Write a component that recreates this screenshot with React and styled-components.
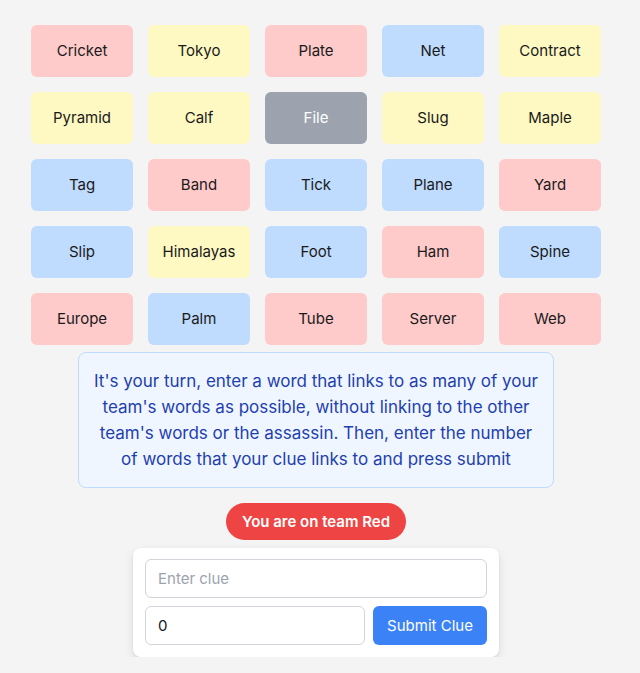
import React, { useState } from "react";
import styled, { createGlobalStyle } from "styled-components";

const GlobalStyle = createGlobalStyle`
  body {
    margin: 0;
    background: #f4f4f4;
    font-family: Inter, "Noto Sans", sans-serif;
  }
  * { box-sizing: border-box; }
`;

const words = [
  ["Cricket", "red"], ["Tokyo", "yellow"], ["Plate", "red"], ["Net", "blue"], ["Contract", "yellow"],
  ["Pyramid", "yellow"], ["Calf", "yellow"], ["File", "gray"], ["Slug", "yellow"], ["Maple", "yellow"],
  ["Tag", "blue"], ["Band", "red"], ["Tick", "blue"], ["Plane", "blue"], ["Yard", "red"],
  ["Slip", "blue"], ["Himalayas", "yellow"], ["Foot", "blue"], ["Ham", "red"], ["Spine", "blue"],
  ["Europe", "red"], ["Palm", "blue"], ["Tube", "red"], ["Server", "red"], ["Web", "red"],
];

const colours = {
  red: "#fecaca",
  yellow: "#fef9c3",
  blue: "#bfdbfe",
  gray: "#9ca3af",
};

const Page = styled.div`
  width: 632px;
  padding-top: 25px;
  display: flex;
  flex-direction: column;
  align-items: center;
`;

const Board = styled.div`
  display: grid;
  grid-template-columns: repeat(5, 102px);
  grid-auto-rows: 52px;
  gap: 15px;
`;

const Card = styled.div`
  display: flex;
  align-items: center;
  justify-content: center;
  border-radius: 6px;
  background: ${(p) => colours[p.$team]};
  color: ${(p) => (p.$team === "gray" ? "#ffffff" : "#1a1a1a")};
  font-size: 15px;
  padding-bottom: 2px;
`;

const Notice = styled.div`
  margin-top: 7px;
  width: 476px;
  padding: 15px 14px;
  background: #eff6ff;
  border: 1px solid #bfdbfe;
  border-radius: 8px;
  color: #1e40af;
  font-size: 17px;
  line-height: 26px;
  text-align: center;
`;

const TeamBadge = styled.div`
  margin-top: 15px;
  height: 37px;
  padding: 0 16px;
  display: flex;
  align-items: center;
  border-radius: 999px;
  background: #ef4444;
  color: #ffffff;
  font-size: 15px;
  font-weight: 600;
`;

const CluePanel = styled.form`
  margin-top: 8px;
  width: 366px;
  padding: 11px 12px 12px;
  background: #ffffff;
  border-radius: 8px;
  box-shadow: 0 4px 10px rgba(0, 0, 0, 0.1), 0 1px 3px rgba(0, 0, 0, 0.06);
  display: flex;
  flex-direction: column;
  gap: 8px;
`;

const Row = styled.div`
  display: flex;
  gap: 8px;
`;

const Input = styled.input`
  height: 39px;
  width: ${(p) => p.$width || "100%"};
  padding: 0 12px;
  border: 1px solid #d1d5db;
  border-radius: 6px;
  font-family: inherit;
  font-size: 15px;
  color: #111827;
  background: #ffffff;
  outline: none;
  &::placeholder { color: #9ca3af; }
`;

const SubmitButton = styled.button`
  flex: 1;
  height: 39px;
  border: none;
  border-radius: 6px;
  background: #3b82f6;
  color: #ffffff;
  font-family: inherit;
  font-size: 15px;
  cursor: pointer;
`;

export default function App() {
  const [clue, setClue] = useState("");
  const [count, setCount] = useState(0);

  return (
    <>
      <GlobalStyle />
      <Page>
        <Board>
          {words.map(([w, team]) => (
            <Card key={w} $team={team}>{w}</Card>
          ))}
        </Board>
        <Notice>
          It's your turn, enter a word that links to as many of your team's words as possible,
          without linking to the other team's words or the assassin. Then, enter the number of
          words that your clue links to and press submit
        </Notice>
        <TeamBadge>You are on team Red</TeamBadge>
        <CluePanel onSubmit={(e) => e.preventDefault()}>
          <Input placeholder="Enter clue" value={clue} onChange={(e) => setClue(e.target.value)} />
          <Row>
            <Input $width="220px" type="number" value={count} onChange={(e) => setCount(e.target.value)} />
            <SubmitButton type="submit">Submit Clue</SubmitButton>
          </Row>
        </CluePanel>
      </Page>
    </>
  );
}
